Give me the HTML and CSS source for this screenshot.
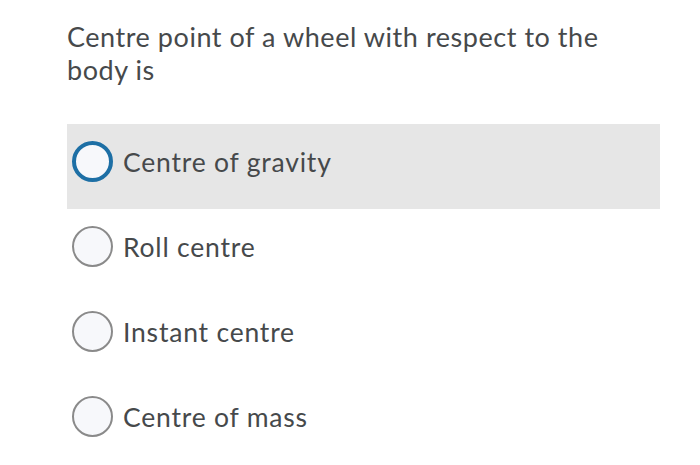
FILE: index.html
```html
<!DOCTYPE html>
<html>
<head>
<meta charset="utf-8">
<link rel="stylesheet" href="styles.css">
</head>
<body>
<div class="page">
  <p class="question">Centre point of a wheel with respect to the body is</p>
  <div class="options">
    <label class="option selected"><span class="radio"></span><span class="label">Centre of gravity</span></label>
    <label class="option"><span class="radio"></span><span class="label">Roll centre</span></label>
    <label class="option"><span class="radio"></span><span class="label">Instant centre</span></label>
    <label class="option"><span class="radio"></span><span class="label">Centre of mass</span></label>
  </div>
</div>
</body>
</html>
```
FILE: styles.css
```css
html, body {
  margin: 0;
  padding: 0;
  background: #ffffff;
}
body {
  font-family: Lato, "Open Sans", sans-serif;
  color: #46494b;
}
.page {
  padding: 20px 40px 0 67px;
}
.question {
  margin: 0;
  font-size: 27px;
  letter-spacing: 0.55px;
  line-height: 33px;
  width: 570px;
}
.options {
  margin-top: 38px;
  display: flex;
  flex-direction: column;
}
.option {
  display: flex;
  align-items: center;
  height: 85px;
  width: 593px;
  box-sizing: border-box;
  padding-left: 5px;
  padding-bottom: 10px;
  gap: 10px;
}
.option.selected {
  background: #e6e6e6;
}
.radio {
  width: 41px;
  height: 41px;
  box-sizing: border-box;
  border-radius: 50%;
  border: 2px solid #8a8a8a;
  background: #f7f8fb;
  flex: none;
}
.selected .radio {
  border: 4px solid #1d6fa5;
}
.label {
  font-size: 26.5px;
  letter-spacing: 0.8px;
}
```
